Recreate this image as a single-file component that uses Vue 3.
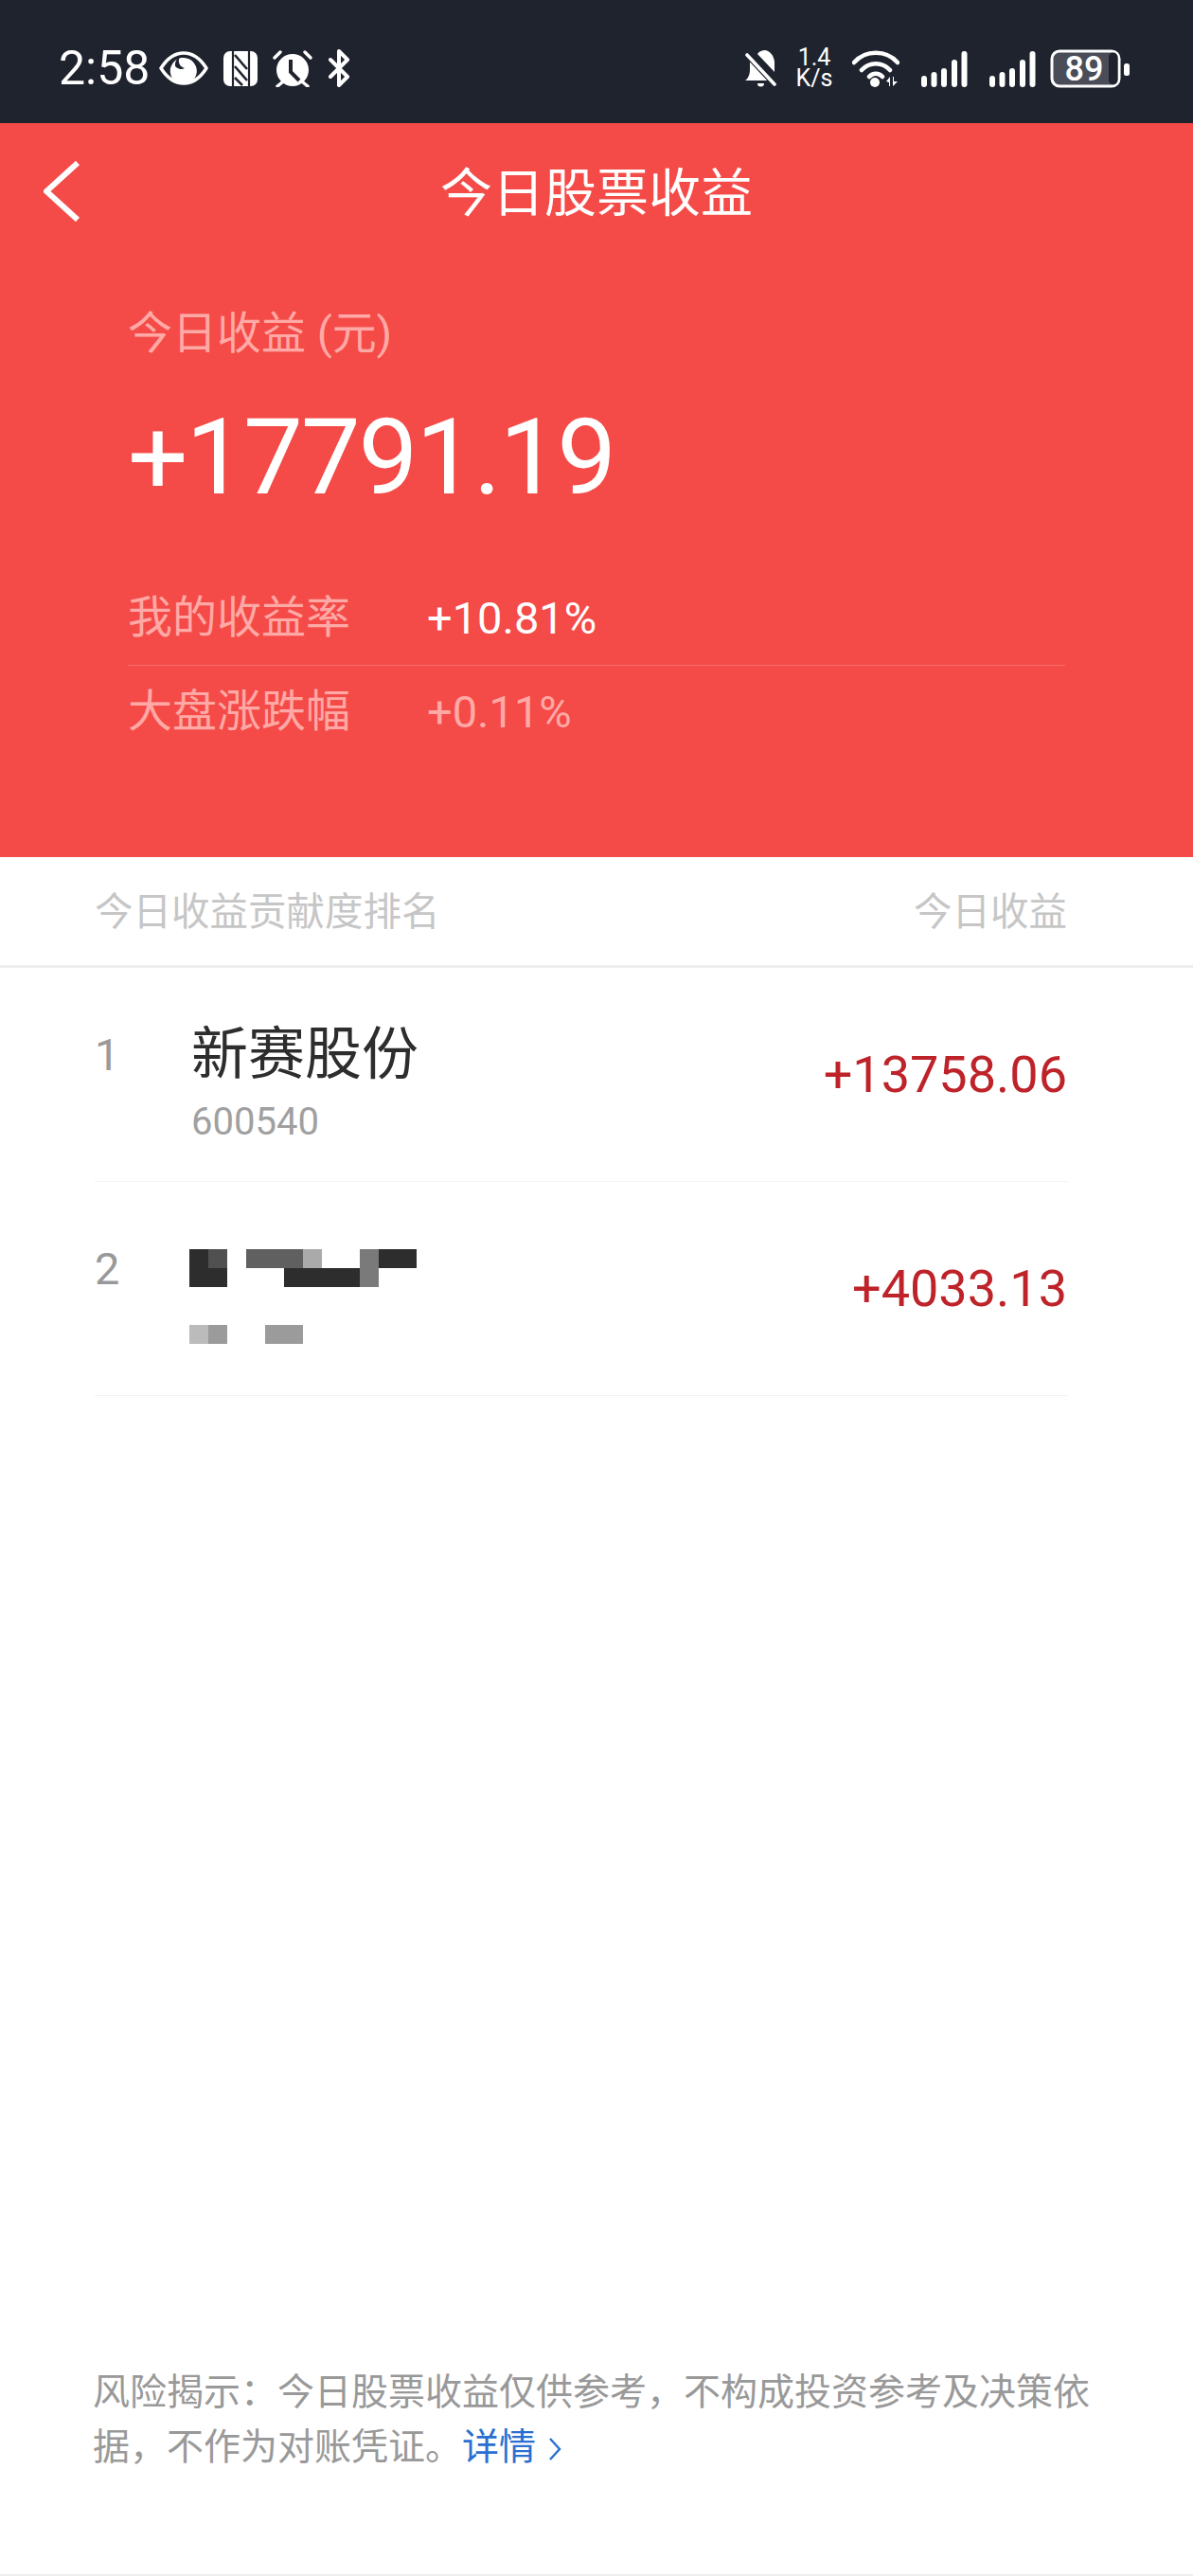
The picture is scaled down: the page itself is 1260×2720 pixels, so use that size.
<script setup>
const blocks = [
  [0, 0, 20, '#2d2d2d'], [20, 0, 20, '#505050'], [60, 0, 60, '#606060'], [120, 0, 20, '#aaaaaa'],
  [180, 0, 20, '#7a7a7a'], [200, 0, 40, '#2d2d2d'], [0, 20, 40, '#2d2d2d'], [100, 20, 80, '#2d2d2d'],
  [180, 20, 20, '#7a7a7a'], [0, 80, 20, '#bbbbbb'], [20, 80, 20, '#9b9b9b'], [80, 80, 40, '#9b9b9b'],
]

const stocks = [
  { rank: 1, name: '新赛股份', code: '600540', profit: '+13758.06' },
  { rank: 2, hidden: true, profit: '+4033.13' },
]

const stats = [
  { label: '我的收益率', value: '+10.81%', bright: true },
  { label: '大盘涨跌幅', value: '+0.11%' },
]

// x, height of each signal bar
const bars = [
  [0, 12], [10.5, 16], [21, 20], [32, 29], [42.5, 38],
]
</script>

<template>
  <div class="page">
    <div class="status">
      <div class="status-left">
        <span class="time">2:58</span>
        <svg class="eye" width="52" height="36" viewBox="0 0 52 36">
          <path d="M2 18C9 7 17 2 26 2s17 5 24 16c-7 11-15 16-24 16S9 29 2 18z" fill="none" stroke="#fff" stroke-width="3.5" stroke-linejoin="round" />
          <path d="M26 7a14 14 0 1 1-10 4a12 12 0 0 1 10-4z" fill="#fff" />
          <path d="M22 6a8 8 0 0 0 5 12a8 8 0 0 1-10-2a10 10 0 0 1 5-10z" fill="#1f232e" />
        </svg>
        <svg width="36" height="37" viewBox="0 0 36 37">
          <rect width="36" height="37" rx="7" fill="#fff" />
          <path d="M10 0v37M27 0v37" stroke="#1f232e" stroke-width="2.2" />
          <path d="M12 4l13 15M12 16l13 15M12 28l8 8" stroke="#1f232e" stroke-width="2.6" fill="none" />
        </svg>
        <svg width="42" height="39" viewBox="0 0 42 39">
          <circle cx="21" cy="21" r="17" fill="#fff" />
          <path d="M19 10v13l9 9" stroke="#1f232e" stroke-width="4" fill="none" />
          <path d="M2 8l6-6M34 2l6 6M10 34l-5 4M32 34l5 4" stroke="#fff" stroke-width="3.4" stroke-linecap="round" />
        </svg>
        <svg width="24" height="40" viewBox="0 0 24 40">
          <path d="M3 11l18 18-9 9V2l9 9L3 29" fill="none" stroke="#fff" stroke-width="4" stroke-linejoin="round" stroke-linecap="round" />
        </svg>
      </div>
      <div class="status-right">
        <svg width="34" height="40" viewBox="0 0 34 40">
          <path d="M1 33c3-2 5-6 5-12v-9l21 21z" fill="#fff" />
          <path d="M14 5c2-3 5-4 8-4 6 1 9 6 10 12v11z" fill="#fff" />
          <path d="M14 36h7a3.5 3.5 0 0 1-7 0z" fill="#fff" />
          <path d="M3 6l29 31" stroke="#1f232e" stroke-width="6" />
          <path d="M3 6l29 31" stroke="#fff" stroke-width="3.6" stroke-linecap="round" />
        </svg>
        <div class="speed"><span>1.4</span><span>K/s</span></div>
        <svg width="50" height="39" viewBox="0 0 50 39">
          <path d="M2 13a31 31 0 0 1 46 0M10 21a20 20 0 0 1 30 0M18 28a9 9 0 0 1 14 0" fill="none" stroke="#fff" stroke-width="4.5" stroke-linecap="round" />
          <circle cx="24" cy="34" r="5" fill="#fff" />
          <path d="M36 33l4-5v10h-1v-4zM43 28h1v5h4l-5 5z" fill="#fff" />
        </svg>
        <svg v-for="n in 2" :key="n" class="signal" width="49" height="39" viewBox="0 0 49 39">
          <rect v-for="b in bars" :key="b[0]" :x="b[0]" :y="39 - b[1]" width="6" :height="b[1]" rx="3" fill="#fff" />
        </svg>
        <svg class="battery" width="84" height="41" viewBox="0 0 84 41">
          <rect x="2" y="2" width="71" height="37" rx="8" fill="#4a4d58" stroke="#fff" stroke-width="3" />
          <rect x="62" y="3.5" width="9.5" height="34" rx="5" fill="#1f232e" />
          <rect x="78" y="15" width="6" height="13" rx="2.5" fill="#fff" />
          <text x="36" y="33" text-anchor="middle" class="battery-text">89</text>
        </svg>
      </div>
    </div>

    <div class="hero">
      <div class="nav">
        <svg width="40" height="64" viewBox="0 0 40 64">
          <path d="M36 2L3 32l33 30" fill="none" stroke="#fff" stroke-width="6" />
        </svg>
        <div class="title">今日股票收益</div>
        <span></span>
      </div>
      <div class="summary">
        <div class="label">今日收益 (元)</div>
        <div class="total">+17791.19</div>
        <div v-for="item in stats" :key="item.label" class="stat">
          <span class="label">{{ item.label }}</span>
          <span class="stat-value" :class="{ bright: item.bright }">{{ item.value }}</span>
        </div>
      </div>
    </div>

    <div class="list-head">
      <span>今日收益贡献度排名</span>
      <span>今日收益</span>
    </div>

    <div class="list">
      <div v-for="s in stocks" :key="s.rank" class="row">
        <span class="rank">{{ s.rank }}</span>
        <div class="stock">
          <svg v-if="s.hidden" class="mosaic" width="240" height="100" viewBox="0 0 240 100">
            <rect v-for="b in blocks" :key="b.join()" :x="b[0]" :y="b[1]" :width="b[2]" height="20" :fill="b[3]" />
          </svg>
          <template v-else>
            <div class="name">{{ s.name }}</div>
            <div class="code">{{ s.code }}</div>
          </template>
        </div>
        <span class="profit">{{ s.profit }}</span>
      </div>
    </div>

    <div class="notice">
      风险揭示&#xFF1A;今日股票收益仅供参考&#xFF0C;不构成投资参考及决策依据&#xFF0C;不作为对账凭证。<span class="more">详情<svg width="20" height="28" viewBox="0 0 20 28"><path d="M5 3l10 11L5 25" fill="none" stroke="#2a6fd0" stroke-width="2.4" /></svg></span>
    </div>
  </div>
</template>

<style scoped>
.page {
  height: 2720px;
  box-sizing: border-box;
  display: flex;
  flex-direction: column;
  background: #fff;
  border-bottom: 2px solid #efefef;
  font-family: Roboto, "Noto Sans CJK SC", sans-serif;
  overflow: hidden;
}

.status {
  height: 130px;
  box-sizing: border-box;
  padding: 14px 67px 0 62px;
  display: flex;
  justify-content: space-between;
  align-items: center;
  background: #1f232e;
}

.status-left,
.status-right {
  display: flex;
  align-items: center;
}

.status-left {
  gap: 16px;
}

.status-right {
  gap: 20px;
}

.time {
  width: 95px;
  margin-right: -5px;
  font-size: 50px;
  line-height: 50px;
  color: #fff;
}

.speed {
  width: 40px;
  display: flex;
  flex-direction: column;
  align-items: center;
  color: #fff;
  font-size: 25px;
  line-height: 22px;
}

.signal {
  margin-left: 3px;
}

.battery {
  margin-left: -5px;
  overflow: visible;
}

.battery-text {
  font-family: Roboto, sans-serif;
  font-size: 36px;
  font-weight: 500;
  fill: #fff;
}

.hero {
  height: 775px;
  background: #f44b48;
}

.nav {
  height: 144px;
  box-sizing: border-box;
  padding: 0 46px 6px;
  display: grid;
  grid-template-columns: 1fr auto 1fr;
  align-items: center;
}

.nav svg {
  margin-top: 6px;
}

.title {
  font-size: 55px;
  color: #fff;
}

.summary {
  padding: 48px 135px 0 135px;
}

.label {
  font-size: 47px;
  line-height: 60px;
  color: #ffa9a6;
}

.total {
  margin-top: 36px;
  font-size: 112px;
  line-height: 130px;
  letter-spacing: -2.2px;
  color: #fff;
}

.stat {
  height: 100px;
  display: grid;
  grid-template-columns: 316px 1fr;
  align-items: center;
}

.stat:nth-of-type(3) {
  margin-top: 54px;
  border-bottom: 1px solid #fa6f6b;
}

.stat:nth-of-type(4) {
  margin-top: -2px;
}

.stat-value {
  font-size: 47px;
  color: #ffa9a6;
}

.stat-value.bright {
  color: #fff;
}

.list-head {
  height: 117px;
  box-sizing: border-box;
  padding: 0 133px 6px 100px;
  display: flex;
  justify-content: space-between;
  align-items: center;
  border-bottom: 3px solid #eeeeee;
  font-size: 40.5px;
  color: #c6c6c6;
}

.list {
  padding: 0 133px 0 100px;
}

.row {
  height: 225px;
  display: flex;
  align-items: flex-start;
  border-bottom: 1px solid #f2f2f2;
}

.rank {
  width: 102px;
  margin-top: 56px;
  font-size: 47px;
  line-height: 72px;
  color: #999;
}

.stock {
  flex: 1;
  padding-top: 56px;
}

.name {
  font-size: 60px;
  line-height: 72px;
  color: #2d2d2d;
}

.code {
  margin-top: 10px;
  font-size: 40px;
  line-height: 50px;
  color: #a0a0a0;
}

.mosaic {
  display: block;
  margin: 15px 0 0 -2px;
}

.profit {
  align-self: center;
  font-size: 54px;
  color: #bd2329;
}

.notice {
  margin-top: auto;
  margin-bottom: 105px;
  padding: 0 90px 0 98px;
  font-size: 39px;
  line-height: 58px;
  color: #999;
}

.more {
  color: #2a6fd0;
}

.more svg {
  margin-left: 10px;
  vertical-align: -3px;
}
</style>

<style>
body {
  background: #fff;
}
</style>
